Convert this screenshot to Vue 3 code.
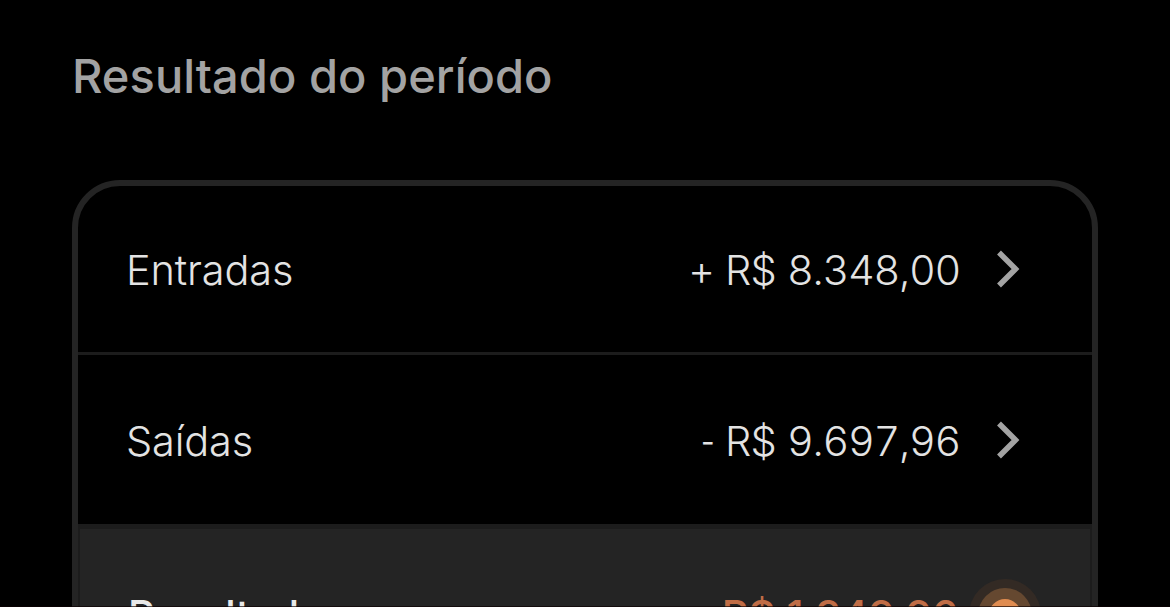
<script setup>
const rows = [
  { label: 'Entradas', sign: '+', value: '8.348,00', kind: 'income' },
  { label: 'Saídas', sign: '-', value: '9.697,96', kind: 'expense' },
]
</script>

<template>
  <main class="screen">
    <h1 class="title">Resultado do período</h1>
    <section class="card">
      <div v-for="row in rows" :key="row.kind" class="row" :class="row.kind">
        <span class="label">{{ row.label }}</span>
        <span class="sign">{{ row.sign }}</span>
        <span class="currency">R$</span>
        <span class="value">{{ row.value }}</span>
        <svg class="chevron" viewBox="0 0 24 40" aria-hidden="true">
          <path d="M3 3.5L19.5 20L3 36.5" />
        </svg>
      </div>
      <div class="total">
        <span class="total-label">Resultado</span>
        <span class="total-value">R$ 1.349,96</span>
        <svg class="pulse" viewBox="0 0 72 72" aria-hidden="true">
          <circle cx="36" cy="36" r="36" fill="#332a24" />
          <circle cx="36" cy="36" r="27" fill="#654830" />
          <circle cx="36" cy="36" r="16" fill="#e08c50" />
        </svg>
      </div>
    </section>
    <div class="edge"></div>
  </main>
</template>

<style>
body {
  background: #000;
  overflow: hidden;
}
</style>

<style scoped>
.screen {
  position: relative;
  box-sizing: border-box;
  width: 1170px;
  height: 607px;
  padding: 46px 72px 0;
  overflow: hidden;
  background: #000;
  font-family: Inter, "Liberation Sans", sans-serif;
  white-space: nowrap;
}
.title {
  margin: 0 0 74px;
  font-size: 47px;
  line-height: 60px;
  font-weight: 550;
  letter-spacing: 0.05px;
  color: #a3a3a3;
}
.card {
  box-sizing: border-box;
  width: 1026px;
  height: 520px;
  border: 6px solid #242424;
  border-radius: 48px;
}
.row {
  box-sizing: border-box;
  display: flex;
  align-items: center;
  height: 169px;
  padding: 2px 72px 0 48px;
  font-size: 41.5px;
  font-weight: 350;
  line-height: 50px;
  color: #e3e3e3;
}
.income {
  border-bottom: 3px solid #1c1c1c;
}
.label {
  margin-right: auto;
  letter-spacing: -0.15px;
}
.sign {
  margin-right: 10px;
}
.expense .sign {
  transform: scaleX(0.75);
  transform-origin: right;
}
.currency {
  margin-right: 11px;
  letter-spacing: -0.8px;
}
.value {
  width: 173px;
  font-variant-numeric: tabular-nums;
  letter-spacing: -1.3px;
}
.chevron {
  width: 24px;
  height: 40px;
  margin: -2px 0 0 36px;
  fill: none;
  stroke: #a3a3a3;
  stroke-width: 5.5;
}
.total {
  box-sizing: border-box;
  display: flex;
  align-items: center;
  height: 178px;
  padding: 0 49px 0 48px;
  border: 2px solid #1c1c1c;
  border-top-width: 5px;
  background: #242424;
  font-size: 41.5px;
  font-weight: 550;
  color: #e9e9e9;
}
.total-label {
  margin-right: auto;
  letter-spacing: -0.2px;
}
.total-value {
  color: #c06d46;
}
.pulse {
  width: 72px;
  height: 72px;
  margin-left: 11px;
}
.edge {
  position: absolute;
  inset: auto 0 0;
  height: 1px;
  background: rgba(12, 0, 2, 0.65);
}
</style>
